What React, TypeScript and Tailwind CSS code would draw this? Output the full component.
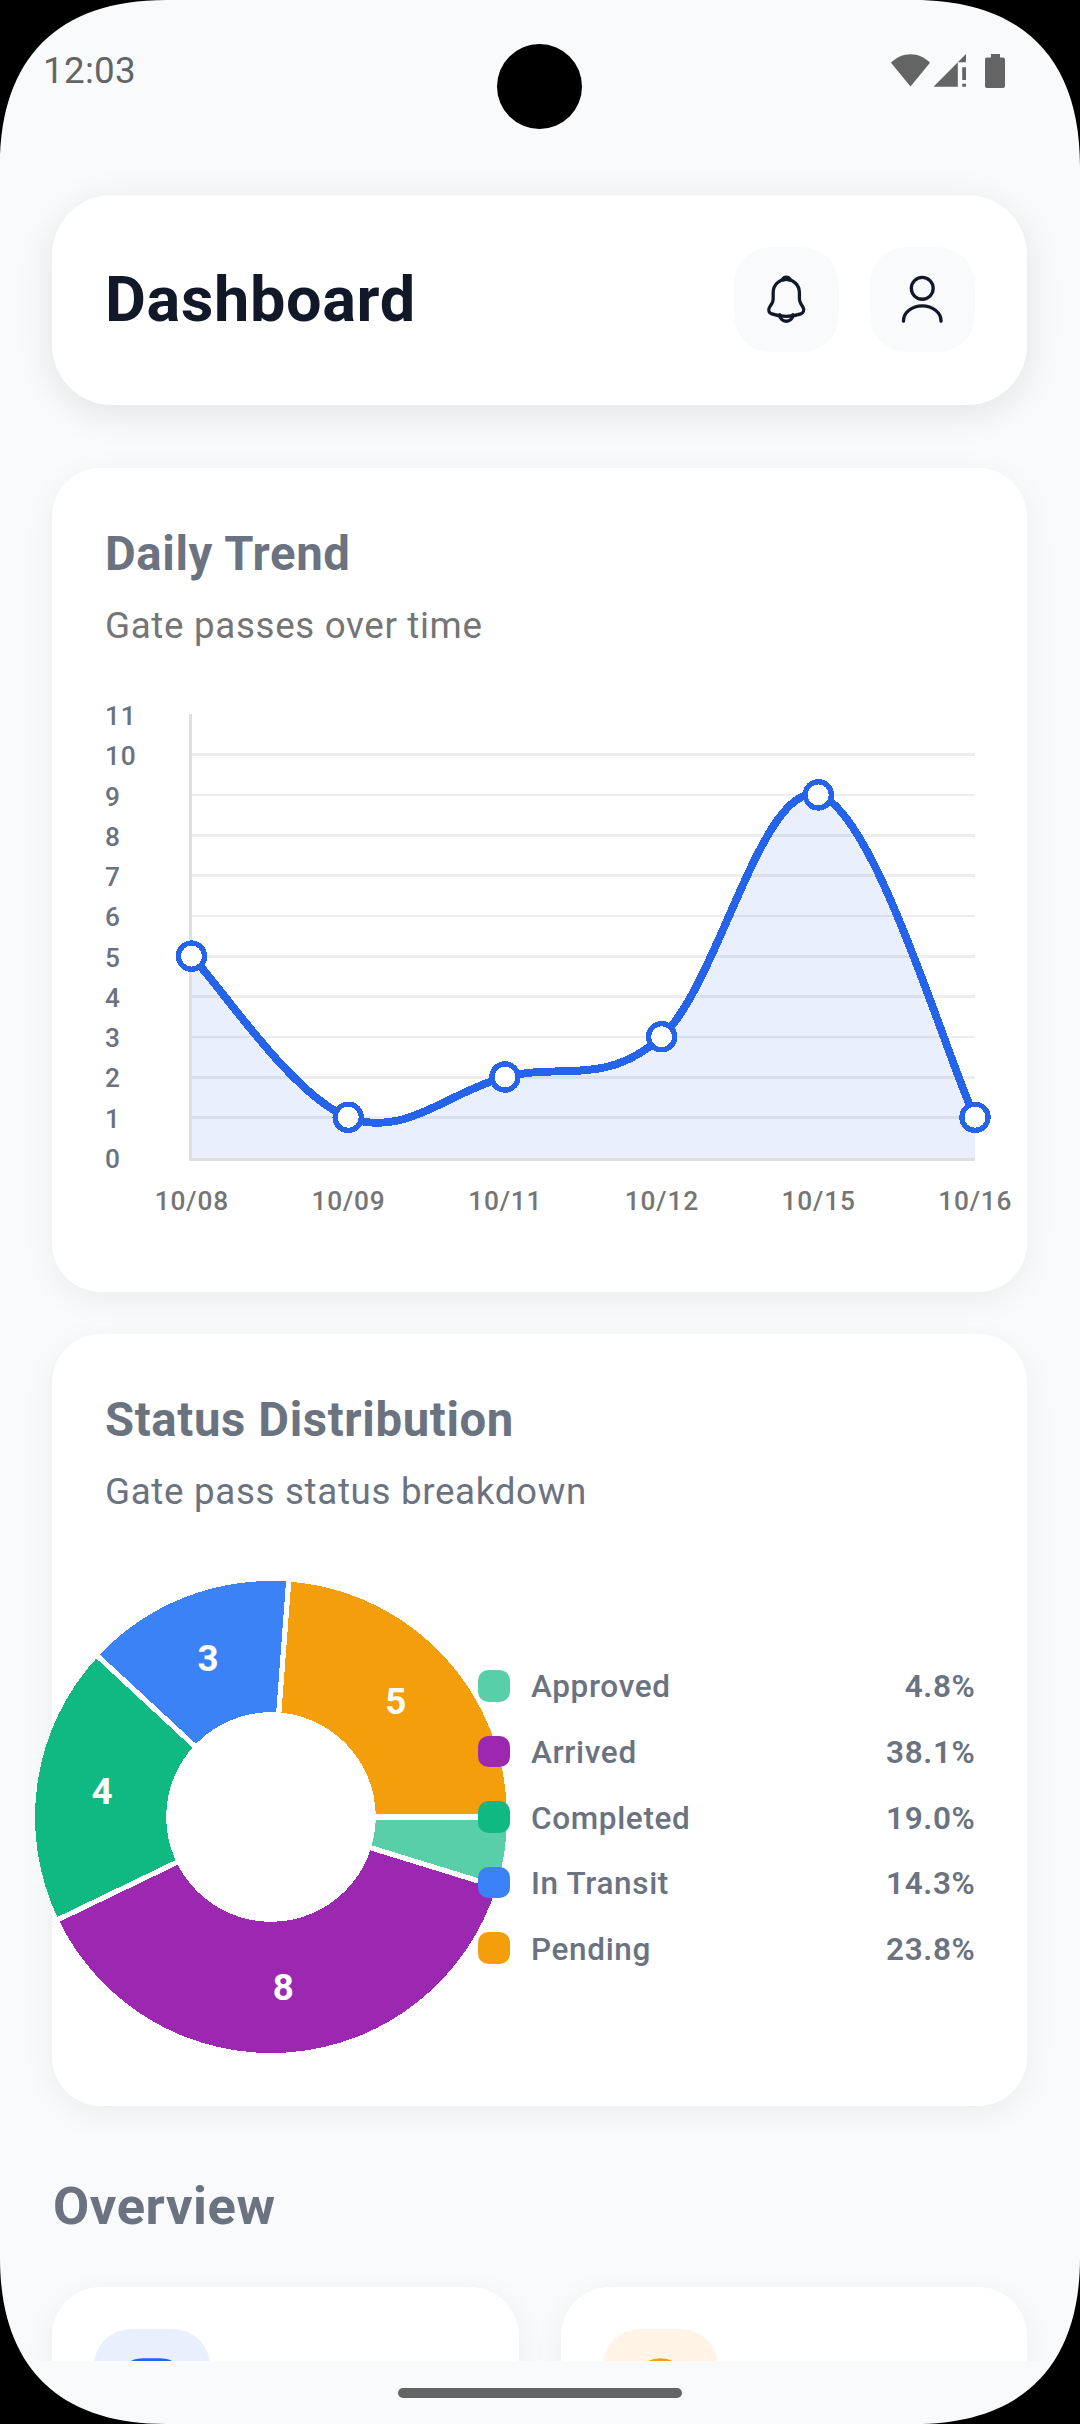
import type { ReactNode } from "react";

/* ---------- data ---------- */

const trend = [
  { label: "10/08", value: 5 },
  { label: "10/09", value: 1 },
  { label: "10/11", value: 2 },
  { label: "10/12", value: 3 },
  { label: "10/15", value: 9 },
  { label: "10/16", value: 1 },
];

const statuses = [
  { name: "Approved", count: 1, share: "4.8%", fill: "#58cfa8", swatch: "bg-[#58cfa8]" },
  { name: "Arrived", count: 8, share: "38.1%", fill: "#9c27b0", swatch: "bg-[#9c27b0]" },
  { name: "Completed", count: 4, share: "19.0%", fill: "#10b981", swatch: "bg-[#10b981]" },
  { name: "In Transit", count: 3, share: "14.3%", fill: "#3b82f6", swatch: "bg-[#3b82f6]" },
  { name: "Pending", count: 5, share: "23.8%", fill: "#f59e0b", swatch: "bg-[#f59e0b]" },
];

/* ---------- device chrome ---------- */

function Corner({ className }: { className: string }) {
  return (
    <svg className={`absolute size-[166px] ${className}`} viewBox="0 0 166 166">
      <path d="M0 0H166C58 0 0 58 0 166Z" fill="#000" />
    </svg>
  );
}

function StatusBar() {
  return (
    <div className="flex h-[142px] shrink-0 items-center justify-between pl-[43px] pr-[75px]">
      <span className="text-[36.75px] leading-none tracking-[0.3px] text-[#646464]">12:03</span>
      <svg className="h-[36px] w-[114px]" viewBox="891 53 114 36" fill="#646464">
        <path d="M910.5 86.5L891 62.8C896.2 57.2 903 54.2 910.5 54.2S924.8 57.2 930 62.8Z" />
        <path d="M933.5 86.8L957.8 62.3V86.8Z" />
        <path d="M966 54V62.3H957.8Z" />
        <path d="M962.2 67.3H966V80H962.2ZM962.2 83.7H966V86.8H962.2Z" />
        <path d="M991 54H1000V57.5H1003A2 2 0 0 1 1005 59.5V86A2 2 0 0 1 1003 88H987A2 2 0 0 1 985 86V59.5A2 2 0 0 1 987 57.5H991Z" />
      </svg>
    </div>
  );
}

/* ---------- icons ---------- */

function BellIcon() {
  return (
    <svg className="size-[52.5px]" viewBox="0 0 24 24" fill="none" stroke="#111827" strokeWidth="1.5" strokeLinecap="round">
      <path d="M12.02 2.91c-3.31 0-6 2.69-6 6v2.89c0 .61-.26 1.54-.57 2.06L4.3 15.77c-.71 1.18-.22 2.49 1.08 2.93 4.31 1.44 8.96 1.44 13.27 0 1.21-.4 1.74-1.83 1.08-2.93l-1.15-1.91c-.3-.52-.56-1.45-.56-2.06V8.91c0-3.3-2.7-6-6-6z" />
      <path d="M13.87 3.2a6.754 6.754 0 0 0-3.7 0c.29-.74 1.01-1.26 1.85-1.26.84 0 1.56.52 1.85 1.26z" strokeLinejoin="round" />
      <path d="M15.02 19.06c0 1.65-1.35 3-3 3-.82 0-1.58-.34-2.12-.88a3.01 3.01 0 0 1-.88-2.12" />
    </svg>
  );
}

function UserIcon() {
  return (
    <svg className="size-[52.5px]" viewBox="0 0 24 24" fill="none" stroke="#111827" strokeWidth="1.5" strokeLinecap="round">
      <circle cx="12" cy="7" r="5" />
      <path d="M20.59 22c0-3.87-3.85-7-8.59-7s-8.59 3.13-8.59 7" />
    </svg>
  );
}

/* ---------- building blocks ---------- */

function IconButton({ children }: { children: ReactNode }) {
  return (
    <button className="flex size-[105px] items-center justify-center rounded-[37px] bg-[#f9fafc]">{children}</button>
  );
}

function ChartCard({
  title,
  subtitle,
  className,
  subtitleClass,
  children,
}: {
  title: string;
  subtitle: string;
  className: string;
  subtitleClass: string;
  children: ReactNode;
}) {
  return (
    <section
      className={`rounded-[49px] bg-white px-[53px] pt-[52px] shadow-[0_8px_32px_rgba(0,0,0,0.055)] ${className}`}
    >
      <h2 className="text-[47.25px] leading-[68px] font-bold tracking-[0.64px] text-[#6b7280]">{title}</h2>
      <p className={`mt-[15px] text-[36.75px] leading-[46px] tracking-[0.66px] ${subtitleClass}`}>{subtitle}</p>
      {children}
    </section>
  );
}

/* ---------- daily trend ---------- */

const X0 = 16.5;
const STEP = 156.7;
const SMOOTH = 0.18;
const yOf = (v: number) => 461.6 - 40.3 * v;
const pts = trend.map((d, i) => ({ x: X0 + i * STEP, y: yOf(d.value) }));
const curve = pts
  .map((p, i) => {
    if (i === 0) return `M${p.x} ${p.y}`;
    const a = pts[i - 1];
    const before = pts[i - 2] ?? a;
    const after = pts[i + 1] ?? p;
    return `C${a.x + (p.x - before.x) * SMOOTH} ${a.y + (p.y - before.y) * SMOOTH} ${p.x - (after.x - a.x) * SMOOTH} ${
      p.y - (after.y - a.y) * SMOOTH
    } ${p.x} ${p.y}`;
  })
  .join("");
const gridRows = [1, 2, 3, 4, 5, 6, 7, 8, 9, 10].map((n) => {
  const height = n % 3 === 0 ? 2 : 3;
  return { n, height, y: Math.round(yOf(n) - height / 2) };
});

function TrendChart() {
  const last = pts[pts.length - 1];
  return (
    <div className="mt-[47px]">
      <div className="flex">
        <div className="w-[70px] shrink-0">
          {[11, 10, 9, 8, 7, 6, 5, 4, 3, 2, 1, 0].map((n) => (
            <div
              key={n}
              className="h-[40.25px] text-[26.25px] leading-[40.25px] font-medium tracking-[0.85px] text-[#6b7280]"
            >
              {n}
            </div>
          ))}
        </div>
        <svg className="h-[483px] w-[816px] shrink-0" viewBox="0 0 816 483">
          {gridRows.map((g) => (
            <rect key={g.n} x="17" y={g.y} width="783" height={g.height} fill="#ededed" />
          ))}
          <rect x="14" y="18" width="3" height="447" fill="#e0e0e0" />
          <rect x="14" y="462" width="786" height="3" fill="#e0e0e0" />
          <path
            d={`${curve}L${last.x} 462L17 462L17 ${pts[0].y}Z`}
            fill="#2563eb"
            fillOpacity="0.1"
            shapeRendering="crispEdges"
          />
          <path d={curve} fill="none" stroke="#2563eb" strokeWidth="7.9" shapeRendering="crispEdges" />
          {pts.map((p) => (
            <circle
              key={p.x}
              cx={p.x}
              cy={p.y}
              r="13.1"
              fill="#fff"
              stroke="#2563eb"
              strokeWidth="5.25"
              shapeRendering="crispEdges"
            />
          ))}
        </svg>
      </div>
      <div className="ml-[8.5px] flex">
        {trend.map((d) => (
          <div
            key={d.label}
            className="w-[156.7px] shrink-0 text-center text-[26.25px] leading-[44px] font-medium tracking-[0.85px] text-[#757575]"
          >
            {d.label}
          </div>
        ))}
      </div>
    </div>
  );
}

/* ---------- status distribution ---------- */

const TOTAL = statuses.reduce((sum, s) => sum + s.count, 0);
const OUTER = 236;
const at = (r: number, angle: number) => `${236 + r * Math.cos(angle)} ${236 + r * Math.sin(angle)}`;
const slices = statuses.map((s, i) => {
  const before = statuses.slice(0, i).reduce((sum, q) => sum + q.count, 0);
  const from = (before / TOTAL) * Math.PI * 2;
  const to = ((before + s.count) / TOTAL) * Math.PI * 2;
  return { ...s, from, d: `M236 236L${at(OUTER, from)}A${OUTER} ${OUTER} 0 0 1 ${at(OUTER, to)}Z` };
});
const pieLabels = [
  { text: "3", x: 173, y: 89.7 },
  { text: "5", x: 360.7, y: 132.7 },
  { text: "4", x: 67, y: 222.7 },
  { text: "8", x: 248.3, y: 418.7 },
];

function StatusDonut() {
  return (
    <svg className="-ml-[70.5px] size-[472px] shrink-0" viewBox="0 0 472 472">
      <g shapeRendering="crispEdges">
        {slices.map((s) => (
          <path key={s.name} d={s.d} fill={s.fill} />
        ))}
        {slices.map((s) => (
          <path key={s.name} d={`M236 236L${at(OUTER + 2, s.from)}`} stroke="#fff" strokeWidth="5.25" />
        ))}
        <circle cx="236" cy="236" r="104.8" fill="#fff" />
      </g>
      {pieLabels.map((l) => (
        <text key={l.text} x={l.x} y={l.y} textAnchor="middle" fill="#fff" className="text-[36.75px] font-bold">
          {l.text}
        </text>
      ))}
    </svg>
  );
}

function StatusLegend() {
  return (
    <ul className="-ml-[28.5px] w-[497.5px] shrink-0">
      {statuses.map((s) => (
        <li
          key={s.name}
          className="flex h-[65.6px] items-center text-[31.5px] leading-[40px] tracking-[0.65px] text-[#6b7280]"
        >
          <span className={`size-[31.5px] rounded-[10.5px] ${s.swatch}`} />
          <span className="ml-[21.5px] pt-[3px] font-medium">{s.name}</span>
          <span className="ml-auto pt-[3px] font-semibold">{s.share}</span>
        </li>
      ))}
    </ul>
  );
}

/* ---------- overview ---------- */

function OverviewCard({ tint, children }: { tint: string; children: ReactNode }) {
  return (
    <div className="h-[320px] rounded-[49px] bg-white p-[42px] shadow-[0_8px_32px_rgba(0,0,0,0.055)]">
      <div className={`flex size-[115.5px] items-center justify-center rounded-[37px] ${tint}`}>{children}</div>
    </div>
  );
}

export default function App() {
  return (
    <div className="relative flex h-[2424px] w-[1080px] flex-col overflow-hidden bg-[#f9fafc] font-['Roboto',sans-serif]">
      <StatusBar />

      <main className="h-[2219px] shrink-0 overflow-hidden pt-[53px] pr-[53px] pl-[52px]">
        <header className="flex h-[210px] items-center justify-between rounded-[60px] bg-white pr-[52px] pb-px pl-[53px] shadow-[0_8px_36px_rgba(0,0,0,0.095)]">
          <h1 className="pt-px text-[63px] leading-[84px] font-bold tracking-[0.65px] text-[#111827]">Dashboard</h1>
          <div className="flex gap-[31.5px]">
            <IconButton>
              <BellIcon />
            </IconButton>
            <IconButton>
              <UserIcon />
            </IconButton>
          </div>
        </header>

        <ChartCard
          title="Daily Trend"
          subtitle="Gate passes over time"
          className="mt-[63px] h-[824px]"
          subtitleClass="text-[#757575]"
        >
          <TrendChart />
        </ChartCard>

        <ChartCard
          title="Status Distribution"
          subtitle="Gate pass status breakdown"
          className="mt-[42px] h-[772px]"
          subtitleClass="text-[#6b7280]"
        >
          <div className="mt-[66px] flex items-center">
            <StatusDonut />
            <StatusLegend />
          </div>
        </ChartCard>

        <h2 className="mt-[69px] pl-px text-[52.5px] leading-[62px] font-bold tracking-[0.6px] text-[#6b7280]">
          Overview
        </h2>
        <div className="mt-[50px] grid grid-cols-2 gap-[42px]">
          <OverviewCard tint="bg-[#e9effd]">
            <svg className="size-[63px]" viewBox="0 0 24 24" fill="none" stroke="#2563eb" strokeWidth="1.5">
              <path d="M9 22h6c5 0 7-2 7-7V9c0-5-2-7-7-7H9C4 2 2 4 2 9v6c0 5 2 7 7 7z" />
            </svg>
          </OverviewCard>
          <OverviewCard tint="bg-[#fff4e5]">
            <svg className="size-[63px]" viewBox="0 0 24 24" fill="none" stroke="#f59e0b" strokeWidth="1.5" strokeLinecap="round">
              <circle cx="12" cy="12" r="10" />
              <path d="M12 7v5l3.5 2" />
            </svg>
          </OverviewCard>
        </div>
      </main>

      <nav className="flex h-[63px] shrink-0 justify-center pt-[27px]">
        <div className="h-[10px] w-[284px] rounded-full bg-[#646464]" />
      </nav>

      <div className="absolute top-[44px] left-[497px] size-[85px] rounded-full bg-black" />
      <Corner className="top-0 left-0" />
      <Corner className="top-0 right-0 -scale-x-100" />
      <Corner className="bottom-0 left-0 -scale-y-100" />
      <Corner className="right-0 bottom-0 -scale-100" />
    </div>
  );
}
